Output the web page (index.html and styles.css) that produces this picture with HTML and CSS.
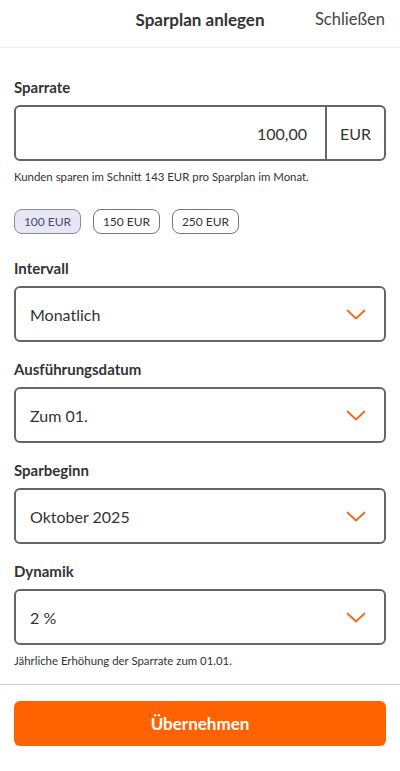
FILE: index.html
```html
<!DOCTYPE html>
<html>

<head>
    <title>Sparplan anlegen</title>
    <link rel="stylesheet" href="styles.css">
</head>

<body>
    <div class="topbar">
        <div class="topbar-title">Sparplan anlegen</div>
        <div class="topbar-close">Schließen</div>
    </div>

    <div class="content">
        <div class="field">
            <div class="field-label">Sparrate</div>
            <div class="amount-box">
                <div class="amount-value">100,00</div>
                <div class="amount-unit">EUR</div>
            </div>
            <div class="field-hint">Kunden sparen im Schnitt 143 EUR pro Sparplan im Monat.</div>
        </div>

        <div class="chips">
            <div class="chip chip-active">100 EUR</div>
            <div class="chip">150 EUR</div>
            <div class="chip">250 EUR</div>
        </div>

        <div class="field">
            <div class="field-label">Intervall</div>
            <div class="select-box">
                <span>Monatlich</span>
                <svg class="chevron" width="20" height="11" viewBox="0 0 20 11"><path d="M1.5 1.5 L10 9.5 L18.5 1.5" fill="none" stroke="#f26a1b" stroke-width="1.8" stroke-linecap="round" stroke-linejoin="round"/></svg>
            </div>
        </div>

        <div class="field">
            <div class="field-label">Ausführungsdatum</div>
            <div class="select-box">
                <span>Zum 01.</span>
                <svg class="chevron" width="20" height="11" viewBox="0 0 20 11"><path d="M1.5 1.5 L10 9.5 L18.5 1.5" fill="none" stroke="#f26a1b" stroke-width="1.8" stroke-linecap="round" stroke-linejoin="round"/></svg>
            </div>
        </div>

        <div class="field">
            <div class="field-label">Sparbeginn</div>
            <div class="select-box">
                <span>Oktober 2025</span>
                <svg class="chevron" width="20" height="11" viewBox="0 0 20 11"><path d="M1.5 1.5 L10 9.5 L18.5 1.5" fill="none" stroke="#f26a1b" stroke-width="1.8" stroke-linecap="round" stroke-linejoin="round"/></svg>
            </div>
        </div>

        <div class="field">
            <div class="field-label">Dynamik</div>
            <div class="select-box">
                <span>2 %</span>
                <svg class="chevron" width="20" height="11" viewBox="0 0 20 11"><path d="M1.5 1.5 L10 9.5 L18.5 1.5" fill="none" stroke="#f26a1b" stroke-width="1.8" stroke-linecap="round" stroke-linejoin="round"/></svg>
            </div>
            <div class="field-hint">Jährliche Erhöhung der Sparrate zum 01.01.</div>
        </div>
    </div>

    <div class="footer">
        <div class="submit">Übernehmen</div>
    </div>
</body>

</html>
```

FILE: styles.css
```css
body {
    font-family: 'Lato', 'Noto Sans', sans-serif;
    background: #ffffff;
    color: #333333;
    margin: 0;
}

.topbar {
    height: 47px;
    border-bottom: 1px solid #eeeeee;
    display: flex;
    align-items: center;
    justify-content: center;
    position: relative;
}

.topbar-title {
    font-size: 17px;
    font-weight: 700;
    margin-top: -8px;
}

.topbar-close {
    position: absolute;
    right: 15px;
    top: 9px;
    font-size: 16.5px;
    color: #444444;
}

.content {
    padding: 29px 14px 0;
}

.field {
    margin-bottom: 17px;
}

.field-label {
    font-size: 15px;
    font-weight: 700;
    line-height: 20px;
    margin-bottom: 8px;
}

.amount-box {
    height: 52px;
    border: 2px solid #666666;
    border-radius: 6px;
    display: flex;
}

.amount-value {
    flex: 1;
    display: flex;
    align-items: center;
    justify-content: flex-end;
    padding-right: 18px;
    font-size: 16px;
    border-right: 2px solid #666666;
}

.amount-unit {
    width: 57px;
    display: flex;
    align-items: center;
    justify-content: center;
    font-size: 16px;
}

.field-hint {
    font-size: 11.4px;
    line-height: 16px;
    margin-top: 8px;
}

.chips {
    display: flex;
    gap: 12px;
    margin: 24px 0;
}

.chip {
    height: 23px;
    width: 65px;
    border: 1px solid #777777;
    border-radius: 8px;
    display: flex;
    align-items: center;
    justify-content: center;
    font-size: 12px;
}

.chip-active {
    background: #e6e6f4;
    border-color: #8a8aaa;
    color: #4a4a66;
}

.select-box {
    height: 52px;
    border: 2px solid #666666;
    border-radius: 6px;
    display: flex;
    align-items: center;
    justify-content: space-between;
    padding: 0 18px 0 14px;
    font-size: 16px;
}

.chevron {
    display: block;
}

.footer {
    margin-top: -2px;
    border-top: 1px solid #d0d0d0;
    padding: 16px 14px 0;
}

.submit {
    height: 45px;
    border-radius: 6px;
    background: #ff6200;
    color: #ffffff;
    font-size: 17px;
    font-weight: 700;
    display: flex;
    align-items: center;
    justify-content: center;
}
```
